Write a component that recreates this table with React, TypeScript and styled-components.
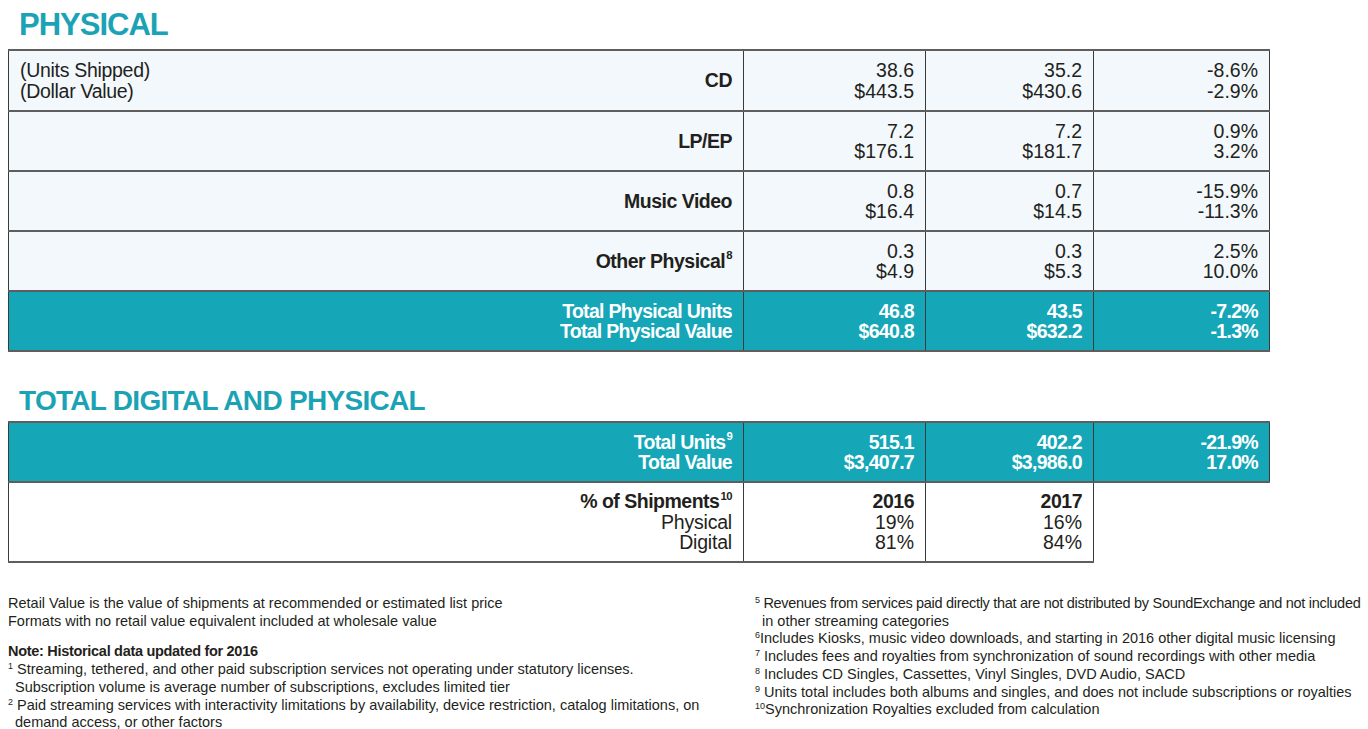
import React from "react";
import styled, { createGlobalStyle } from "styled-components";

const Global = createGlobalStyle`
  html, body { margin: 0; padding: 0; background: #ffffff; }
  body {
    font-family: "Liberation Sans", Arial, sans-serif;
    color: #231f20;
  }
`;

const TEAL = "#15a7b8";

const Page = styled.div`
  width: 1368px;
  height: 729px;
  padding: 0 8px;
  box-sizing: border-box;
  overflow: hidden;
`;

const SectionTitle = styled.h2<{ $size: number; $top: number; $height: number; $ls: number }>`
  margin: ${(p) => p.$top}px 0 0 11px;
  font-family: "Liberation Sans", Arial, sans-serif;
  font-weight: 700;
  font-size: ${(p) => p.$size}px;
  line-height: ${(p) => p.$size + 2}px;
  color: #1ba3b5;
  letter-spacing: ${(p) => p.$ls}px;
  height: ${(p) => p.$height}px;
`;

const Table = styled.table`
  border-collapse: collapse;
  table-layout: fixed;
  width: 1261px;
  font-size: 19.5px;
  line-height: 20.5px;
`;

const Row = styled.tr<{ $variant: "light" | "teal" | "white"; $h?: number }>`
  height: ${(p) => p.$h ?? 60}px;
  background: ${(p) =>
    p.$variant === "light" ? "#f2f8fb" : p.$variant === "teal" ? TEAL : "#ffffff"};
  color: ${(p) => (p.$variant === "teal" ? "#ffffff" : "#231f20")};
  font-weight: ${(p) => (p.$variant === "teal" ? 700 : 400)};
  letter-spacing: ${(p) => (p.$variant === "teal" ? "-0.7px" : "0")};
`;

const Cell = styled.td<{ $blank?: boolean }>`
  border-top: 2px solid #5e5e5e;
  border-bottom: ${(p) => (p.$blank ? "none" : "2px solid #5e5e5e")};
  border-left: ${(p) => (p.$blank ? "none" : "1.5px solid #3a3a3a")};
  border-right: ${(p) => (p.$blank ? "none" : "1.5px solid #3a3a3a")};
  background: ${(p) => (p.$blank ? "#ffffff" : "transparent")};
  padding: 0 11px 0 11px;
  text-align: right;
  vertical-align: middle;
  white-space: nowrap;
`;

const LabelInner = styled.div`
  display: flex;
  justify-content: space-between;
  align-items: center;
`;

const Units = styled.div`
  text-align: left;
  font-weight: 400;
  letter-spacing: -0.3px;
`;

const Bold = styled.span`
  font-weight: 700;
  letter-spacing: -0.5px;
`;

const Light = styled.div`
  letter-spacing: -0.2px;
`;

const Line = styled.div``;

const Sup = styled.sup`
  font-size: 0.58em;
  vertical-align: 0.75em;
  line-height: 0;
  margin-left: 1px;
`;

const Notes = styled.div`
  display: grid;
  grid-template-columns: 747px 1fr;
  margin-top: 32px;
  font-size: 14.5px;
  line-height: 17.7px;
  color: #231f20;
`;

const NoteCol = styled.div``;

const NoteLine = styled.div<{ $indent?: boolean; $bold?: boolean; $gapTop?: boolean; $ls?: number }>`
  white-space: nowrap;
  padding-left: ${(p) => (p.$indent ? "7px" : "0")};
  font-weight: ${(p) => (p.$bold ? 700 : 400)};
  letter-spacing: ${(p) => (p.$ls ?? (p.$bold ? -0.3 : 0))}px;
  margin-top: ${(p) => (p.$gapTop ? "13px" : "0")};
`;

const NoteSup = styled.sup`
  font-size: 0.62em;
  vertical-align: 0.6em;
  line-height: 0;
`;

type Phys = { label: React.ReactNode; a: [string, string]; b: [string, string]; c: [string, string]; first?: boolean };

const physical: Phys[] = [
  { label: "CD", a: ["38.6", "$443.5"], b: ["35.2", "$430.6"], c: ["-8.6%", "-2.9%"], first: true },
  { label: "LP/EP", a: ["7.2", "$176.1"], b: ["7.2", "$181.7"], c: ["0.9%", "3.2%"] },
  { label: "Music Video", a: ["0.8", "$16.4"], b: ["0.7", "$14.5"], c: ["-15.9%", "-11.3%"] },
  {
    label: (
      <>
        Other Physical<Sup>8</Sup>
      </>
    ),
    a: ["0.3", "$4.9"],
    b: ["0.3", "$5.3"],
    c: ["2.5%", "10.0%"],
  },
];

const Pair = ({ v }: { v: [string, string] }) => (
  <>
    <Line>{v[0]}</Line>
    <Line>{v[1]}</Line>
  </>
);

const Cols = () => (
  <colgroup>
    <col style={{ width: 735 }} />
    <col style={{ width: 182 }} />
    <col style={{ width: 168 }} />
    <col style={{ width: 176 }} />
  </colgroup>
);

export default function App() {
  return (
    <Page>
      <Global />
      <SectionTitle $size={31} $top={8} $height={41} $ls={-1}>PHYSICAL</SectionTitle>
      <Table>
        <Cols />
        <tbody>
          {physical.map((r, i) => (
            <Row key={i} $variant="light" $h={i === 0 ? 61 : 60}>
              <Cell>
                {r.first ? (
                  <LabelInner>
                    <Units>
                      <Line>(Units Shipped)</Line>
                      <Line>(Dollar Value)</Line>
                    </Units>
                    <Bold>{r.label}</Bold>
                  </LabelInner>
                ) : (
                  <Bold>{r.label}</Bold>
                )}
              </Cell>
              <Cell><Pair v={r.a} /></Cell>
              <Cell><Pair v={r.b} /></Cell>
              <Cell><Pair v={r.c} /></Cell>
            </Row>
          ))}
          <Row $variant="teal">
            <Cell>
              <Line>Total Physical Units</Line>
              <Line>Total Physical Value</Line>
            </Cell>
            <Cell><Pair v={["46.8", "$640.8"]} /></Cell>
            <Cell><Pair v={["43.5", "$632.2"]} /></Cell>
            <Cell><Pair v={["-7.2%", "-1.3%"]} /></Cell>
          </Row>
        </tbody>
      </Table>

      <SectionTitle $size={28} $top={34} $height={35} $ls={-0.7}>TOTAL DIGITAL AND PHYSICAL</SectionTitle>
      <Table>
        <Cols />
        <tbody>
          <Row $variant="teal">
            <Cell>
              <Line>
                Total Units<Sup>9</Sup>
              </Line>
              <Line>Total Value</Line>
            </Cell>
            <Cell><Pair v={["515.1", "$3,407.7"]} /></Cell>
            <Cell><Pair v={["402.2", "$3,986.0"]} /></Cell>
            <Cell><Pair v={["-21.9%", "17.0%"]} /></Cell>
          </Row>
          <Row $variant="white" $h={80}>
            <Cell>
              <Line>
                <Bold>
                  % of Shipments<Sup>10</Sup>
                </Bold>
              </Line>
              <Light>Physical</Light>
              <Light>Digital</Light>
            </Cell>
            <Cell>
              <Line><Bold>2016</Bold></Line>
              <Line>19%</Line>
              <Line>81%</Line>
            </Cell>
            <Cell>
              <Line><Bold>2017</Bold></Line>
              <Line>16%</Line>
              <Line>84%</Line>
            </Cell>
            <Cell $blank />
          </Row>
        </tbody>
      </Table>

      <Notes>
        <NoteCol>
          <NoteLine>Retail Value is the value of shipments at recommended or estimated list price</NoteLine>
          <NoteLine>Formats with no retail value equivalent included at wholesale value</NoteLine>
          <NoteLine $bold $gapTop>Note: Historical data updated for 2016</NoteLine>
          <NoteLine>
            <NoteSup>1</NoteSup> Streaming, tethered, and other paid subscription services not operating under statutory licenses.
          </NoteLine>
          <NoteLine $indent>Subscription volume is average number of subscriptions, excludes limited tier</NoteLine>
          <NoteLine>
            <NoteSup>2</NoteSup> Paid streaming services with interactivity limitations by availability, device restriction, catalog limitations, on
          </NoteLine>
          <NoteLine $indent>demand access, or other factors</NoteLine>
        </NoteCol>
        <NoteCol>
          <NoteLine $ls={-0.3}>
            <NoteSup>5</NoteSup> Revenues from services paid directly that are not distributed by SoundExchange and not included
          </NoteLine>
          <NoteLine $indent>in other streaming categories</NoteLine>
          <NoteLine>
            <NoteSup>6</NoteSup>Includes Kiosks, music video downloads, and starting in 2016 other digital music licensing
          </NoteLine>
          <NoteLine>
            <NoteSup>7</NoteSup> Includes fees and royalties from synchronization of sound recordings with other media
          </NoteLine>
          <NoteLine>
            <NoteSup>8</NoteSup> Includes CD Singles, Cassettes, Vinyl Singles, DVD Audio, SACD
          </NoteLine>
          <NoteLine>
            <NoteSup>9</NoteSup> Units total includes both albums and singles, and does not include subscriptions or royalties
          </NoteLine>
          <NoteLine>
            <NoteSup>10</NoteSup>Synchronization Royalties excluded from calculation
          </NoteLine>
        </NoteCol>
      </Notes>
    </Page>
  );
}
